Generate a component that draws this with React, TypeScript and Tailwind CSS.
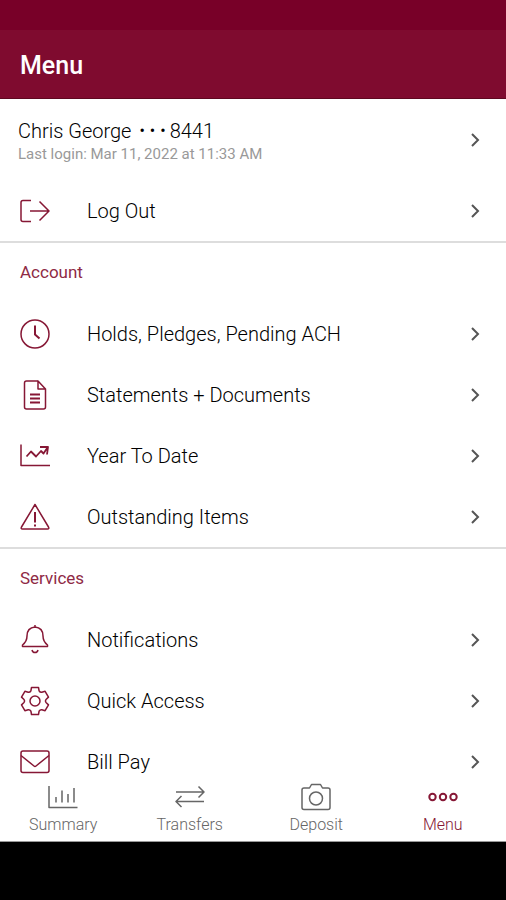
import React from 'react';

const icons = {
  logout: (
    <>
      <path d="M11 4.5H3Q1 4.5 1 6.5V23.5Q1 25.5 3 25.5H11" />
      <path d="M10 15H29M19.5 5.5L29 15L19.5 24.5" />
    </>
  ),
  clock: (
    <>
      <circle cx="15" cy="15" r="14" />
      <path d="M15 6.5V15.5L19.5 19.5" strokeWidth="2" />
    </>
  ),
  document: (
    <>
      <path d="M18 1H6.5Q4.5 1 4.5 3V27Q4.5 29 6.5 29H23.5Q25.5 29 25.5 27V9L18 1V9H25.5" />
      <path d="M10 14.5H20M10 18.5H20M10 22.5H20" strokeWidth="2" />
    </>
  ),
  trend: (
    <>
      <path d="M1 3.5V24.5H30" />
      <path d="M6.5 15.5L11 10.5L16 15.5L21 10L23.5 12.5L27.5 6.5M20 6H28L27 13.5" strokeWidth="1.8" />
    </>
  ),
  warning: (
    <>
      <path d="M15 2.5L1.5 25Q0.5 27 2.5 27H27.5Q29.5 27 28.5 25Z" />
      <path d="M15 10V20.5M15 22.5V24.5" strokeWidth="2" />
    </>
  ),
  bell: (
    <>
      <path d="M15 0V2M15 2C9.5 2.5 7 6 7 11C7 16 5 18 2.5 20V21.5H27.5V20C25 18 23 16 23 11C23 6 20.5 2.5 15 2Z" />
      <path d="M12 25Q12.5 27.5 15 27.5T18 25" />
    </>
  ),
  gear: (
    <>
      <path d="M11.5 1.5H18.5L19.1 4.8Q20 6.5 21.8 6.3L25.1 5.3L28.5 11.1L26 13.5Q24.8 15 26 16.5L28.5 18.9L25.1 24.7L21.8 23.7Q20 23.5 19.1 25.2L18.5 28.5H11.5L10.9 25.2Q10 23.5 8.2 23.7L4.9 24.7L1.5 18.9L4 16.5Q5.2 15 4 13.5L1.5 11.1L4.9 5.3L8.2 6.3Q10 6.5 10.9 4.8Z" />
      <circle cx="15" cy="15" r="5" />
    </>
  ),
  mail: (
    <>
      <rect x="1" y="4" width="28" height="21.5" rx="2" />
      <path d="M1 8.5L14 19Q15 20 16 19L29 8.5" />
    </>
  ),
  summary: (
    <>
      <path d="M1 4V25.5H29.5" />
      <path d="M8 15V20.5M14 8.5V20.5M20 12V20.5M26 6V20.5" />
    </>
  ),
  transfers: (
    <>
      <path d="M1 10H29M23.5 4.5L29 10L23.5 15.5" />
      <path d="M29 19.5H1M6.5 14L1 19.5L6.5 25" />
    </>
  ),
  camera: (
    <>
      <path d="M1 8Q1 6 3 6H8.5L10.5 2.5H19.5L21.5 6H27Q29 6 29 8V25.5Q29 27.5 27 27.5H3Q1 27.5 1 25.5Z" />
      <circle cx="15" cy="16.5" r="6.5" />
    </>
  ),
  dots: (
    <g strokeWidth="2">
      <circle cx="4.5" cy="15" r="3.2" />
      <circle cx="15" cy="15" r="3.2" />
      <circle cx="25.5" cy="15" r="3.2" />
    </g>
  ),
};

type IconName = keyof typeof icons;

const Icon = ({ name }: { name: IconName }) => (
  <svg
    viewBox="0 0 30 30"
    className="size-[30px] shrink-0"
    fill="none"
    stroke="currentColor"
    strokeWidth="1.5"
    strokeLinejoin="round"
    aria-hidden="true"
  >
    {icons[name]}
  </svg>
);

const Chevron = () => (
  <svg
    viewBox="0 0 10 14"
    className="w-[10px] h-[14px] shrink-0 ml-auto text-[#555555]"
    fill="none"
    stroke="currentColor"
    strokeWidth="2"
    aria-hidden="true"
  >
    <path d="M2 1L8 7L2 13" />
  </svg>
);

const MenuRow = ({ icon, label }: { icon: IconName; label: string }) => (
  <button type="button" className="flex items-center w-full h-[61px] pl-5 pr-[26px] text-left">
    <span className="flex mr-[37px] text-[#861735]">
      <Icon name={icon} />
    </span>
    <span className="text-xl font-light text-black">{label}</span>
    <Chevron />
  </button>
);

const sections: { title: string; items: { icon: IconName; label: string }[] }[] = [
  {
    title: 'Account',
    items: [
      { icon: 'clock', label: 'Holds, Pledges, Pending ACH' },
      { icon: 'document', label: 'Statements + Documents' },
      { icon: 'trend', label: 'Year To Date' },
      { icon: 'warning', label: 'Outstanding Items' },
    ],
  },
  {
    title: 'Services',
    items: [
      { icon: 'bell', label: 'Notifications' },
      { icon: 'gear', label: 'Quick Access' },
      { icon: 'mail', label: 'Bill Pay' },
    ],
  },
];

const tabs: { icon: IconName; label: string }[] = [
  { icon: 'summary', label: 'Summary' },
  { icon: 'transfers', label: 'Transfers' },
  { icon: 'camera', label: 'Deposit' },
  { icon: 'dots', label: 'Menu' },
];

const App = () => {
  return (
    <div className="flex flex-col h-screen bg-white font-['Roboto',sans-serif]">
      <div className="h-[30px] shrink-0 bg-[#780028]" />
      <header className="flex items-center h-[69px] shrink-0 px-5 pt-1 bg-[#7f0b2f] border-b border-[#5e0820]">
        <h1 className="text-[25px] font-medium text-white">Menu</h1>
      </header>

      <main className="flex-1 min-h-0 overflow-y-auto [scrollbar-width:none]">
        <div className="border-b-2 border-[#dddddd]">
          <button type="button" className="flex items-center w-full h-[81px] pl-[18px] pr-[26px] text-left">
            <span className="flex flex-col gap-px pt-[3px]">
              <span className="flex items-center text-xl leading-6 font-light text-black">
                Chris George
                <span className="flex gap-[5px] ml-2 mr-1 text-base leading-6 font-normal">
                  <span>•</span>
                  <span>•</span>
                  <span>•</span>
                </span>
                8441
              </span>
              <span className="text-[15px] leading-5 text-[#999999]">
                Last login: Mar 11, 2022 at 11:33 AM
              </span>
            </span>
            <Chevron />
          </button>
          <MenuRow icon="logout" label="Log Out" />
        </div>

        {sections.map((section) => (
          <section key={section.title} className="border-b-2 border-[#dddddd] last:border-b-0">
            <h2 className="flex items-center h-[60px] px-5 text-[17px] text-[#8f2a45]">{section.title}</h2>
            {section.items.map((item) => (
              <MenuRow key={item.label} icon={item.icon} label={item.label} />
            ))}
          </section>
        ))}
      </main>

      <nav className="grid grid-cols-4 shrink-0 pt-[2px] pb-[6px] bg-white border-b border-[#999999]">
        {tabs.map((tab) => (
          <button
            key={tab.label}
            type="button"
            className={`flex flex-col items-center gap-[3px] ${
              tab.label === 'Menu' ? 'text-[#861735]' : 'text-[#666666]'
            }`}
          >
            <Icon name={tab.icon} />
            <span
              className={`text-base leading-5 font-light ${
                tab.label === 'Menu' ? 'text-[#861735]' : 'text-[#666666]'
              }`}
            >
              {tab.label}
            </span>
          </button>
        ))}
      </nav>
      <div className="h-[58px] shrink-0 bg-black" />
    </div>
  );
};

export default App;
